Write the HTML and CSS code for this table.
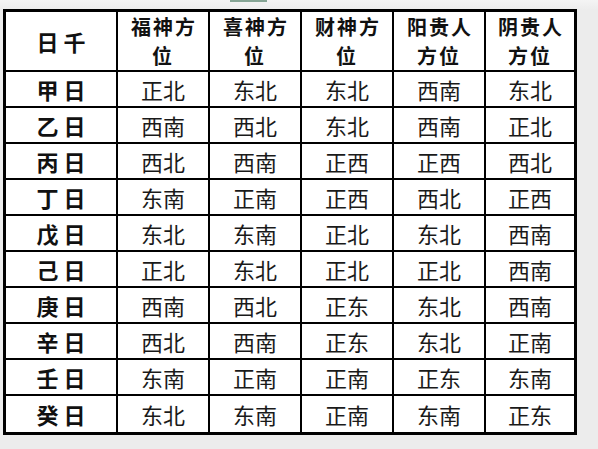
FILE: index.html
```html
<!DOCTYPE html>
<html lang="zh">
<head>
<meta charset="utf-8">
<link rel="stylesheet" href="styles.css">
</head>
<body>
<div class="page">
  <div class="tab-mark"></div>
  <table class="grid">
    <thead>
      <tr>
        <th class="c1 key">日千</th>
        <th class="c">福神方<br>位</th>
        <th class="c">喜神方<br>位</th>
        <th class="c">财神方<br>位</th>
        <th class="c">阳贵人<br>方位</th>
        <th class="c last">阴贵人<br>方位</th>
      </tr>
    </thead>
    <tbody>
      <tr><td class="key">甲日</td><td>正北</td><td>东北</td><td>东北</td><td>西南</td><td class="last">东北</td></tr>
      <tr><td class="key">乙日</td><td>西南</td><td>西北</td><td>东北</td><td>西南</td><td class="last">正北</td></tr>
      <tr><td class="key">丙日</td><td>西北</td><td>西南</td><td>正西</td><td>正西</td><td class="last">西北</td></tr>
      <tr><td class="key">丁日</td><td>东南</td><td>正南</td><td>正西</td><td>西北</td><td class="last">正西</td></tr>
      <tr><td class="key">戊日</td><td>东北</td><td>东南</td><td>正北</td><td>东北</td><td class="last">西南</td></tr>
      <tr><td class="key">己日</td><td>正北</td><td>东北</td><td>正北</td><td>正北</td><td class="last">西南</td></tr>
      <tr><td class="key">庚日</td><td>西南</td><td>西北</td><td>正东</td><td>东北</td><td class="last">西南</td></tr>
      <tr><td class="key">辛日</td><td>西北</td><td>西南</td><td>正东</td><td>东北</td><td class="last">正南</td></tr>
      <tr><td class="key">壬日</td><td>东南</td><td>正南</td><td>正南</td><td>正东</td><td class="last">东南</td></tr>
      <tr class="end"><td class="key">癸日</td><td>东北</td><td>东南</td><td>正南</td><td>东南</td><td class="last">正东</td></tr>
    </tbody>
  </table>
</div>
</body>
</html>
```
FILE: styles.css
```css
html, body {
  margin: 0;
  padding: 0;
}
body {
  background: #ececec;
  font-family: "Noto Sans CJK SC", "Noto Sans CJK JP", sans-serif;
  color: #111;
}
.page {
  width: 598px;
  height: 449px;
  padding-left: 3px;
  box-sizing: border-box;
  background: linear-gradient(to bottom, #f4f4f4 0, #ececec 10px, #ececec 100%);
}
.tab-mark {
  margin-left: 227px;
  width: 37px;
  height: 2px;
  background: #86a595;
}
.grid {
  margin-top: 7px;
  border-collapse: separate;
  border-spacing: 0;
  border: 3px solid #000;
  table-layout: fixed;
  background: #fff;
}
.grid th,
.grid td {
  box-sizing: border-box;
  padding: 0;
  text-align: center;
  vertical-align: middle;
  border-right: 2px solid #000;
  border-bottom: 2px solid #000;
  font-size: 22px;
  white-space: nowrap;
}
.grid th {
  height: 60px;
  font-size: 20px;
  font-weight: bold;
  line-height: 29px;
  letter-spacing: 2px;
  text-indent: 2px;
  width: 92px;
}
.grid th.c1 {
  width: 112px;
}
.grid th.last {
  width: 88px;
}
.grid .last {
  border-right: none;
}
.grid td {
  height: 36px;
  line-height: 34px;
  font-weight: normal;
  color: #1a1a1a;
}
.grid .key {
  font-size: 22px;
  font-weight: bold;
  letter-spacing: 5px;
  text-indent: 5px;
  color: #111;
}
.grid tr.end td {
  border-bottom: none;
}
```
